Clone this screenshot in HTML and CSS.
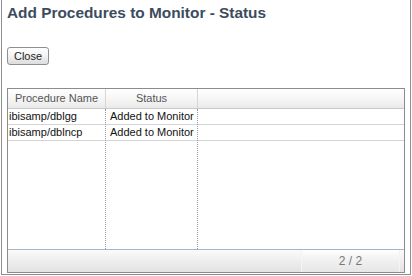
FILE: index.html
```html
<!DOCTYPE html>
<html>
<head>
<meta charset="utf-8">
<title>Add Procedures to Monitor - Status</title>
<link rel="stylesheet" href="styles.css">
</head>
<body>

<div class="window">
	<h1 class="title">Add Procedures to Monitor - Status</h1>

	<button class="btn" type="button">Close</button>

	<div class="grid">
		<div class="grid-head">
			<div class="col col-name">Procedure Name</div>
			<div class="col col-status">Status</div>
			<div class="col col-fill"></div>
		</div>

		<div class="grid-body">
			<div class="col col-name">
				<div class="cell">ibisamp/dblgg</div>
				<div class="cell">ibisamp/dblncp</div>
			</div>
			<div class="col col-status">
				<div class="cell">Added to Monitor</div>
				<div class="cell">Added to Monitor</div>
			</div>
			<div class="col col-fill">
				<div class="cell"></div>
				<div class="cell"></div>
			</div>
		</div>

		<div class="grid-foot">
			<div class="pager">2 / 2</div>
		</div>
	</div>
</div>

</body>
</html>
```

FILE: styles.css
```css
body {
	margin: 0;
	background: #fff;
	font-family: "Liberation Sans", Arial, sans-serif;
}

.window {
	width: 398px;
	margin-left: 1px;
	padding: 4px 5px 1px 5px;
	border: 1px solid #8e8e8e;
	border-top: none;
}

.title {
	margin: 0;
	font-size: 15.4px;
	line-height: 18px;
	font-weight: bold;
	color: #3b4c60;
}

.btn {
	display: block;
	margin-top: 25px;
	width: 42px;
	height: 18px;
	padding: 0;
	border: 1px solid #8f8f8f;
	border-radius: 3px;
	background: linear-gradient(#ffffff, #f3f3f3 50%, #dcdcdc);
	font: 11px "Liberation Sans", Arial, sans-serif;
	color: #1e1e1e;
}

.grid {
	margin-top: 23px;
	height: 183px;
	border: 1px solid #8c8c8c;
	display: flex;
	flex-direction: column;
	font-size: 11px;
}

	.grid-head {
		display: flex;
		height: 19px;
		border-bottom: 1px solid #c9c9c9;
		background: linear-gradient(#ffffff, #f4f4f4 60%, #e9e9e9);
		color: #555;
	}

		.grid-head .col {
			line-height: 19px;
			text-align: center;
			border-right: 1px solid #d6d6d6;
		}

		.grid-head .col-fill {
			border-right: none;
		}

	.grid-body {
		flex: 1;
		display: flex;
		color: #111;
	}

		.grid-body .col {
			border-right: 1px dotted #9a9a9a;
		}

		.grid-body .col-fill {
			border-right: none;
		}

	.col-name {
		width: 97px;
	}

	.col-status {
		width: 91px;
	}

	.col-fill {
		flex: 1;
	}

	.cell {
		height: 15px;
		line-height: 15px;
		border-bottom: 1px solid #d4d4d4;
		white-space: nowrap;
	}

	.col-name .cell {
		padding-left: 1px;
	}

	.col-status .cell {
		padding-left: 4px;
	}

	.grid-foot {
		height: 22px;
		border-top: 1px solid #a7b4c2;
		background: linear-gradient(#fbfbfb, #eeeeee 50%, #e2e2e2);
		display: flex;
		justify-content: flex-end;
		padding-right: 4px;
	}

		.pager {
			width: 97px;
			border-left: 1px solid #f4f4f4;
			border-right: 1px solid #f4f4f4;
			background: linear-gradient(#ffffff, #f1f1f1 45%, #e6e6e6);
			text-align: center;
			line-height: 22px;
			font-size: 12px;
			color: #777;
		}
```
